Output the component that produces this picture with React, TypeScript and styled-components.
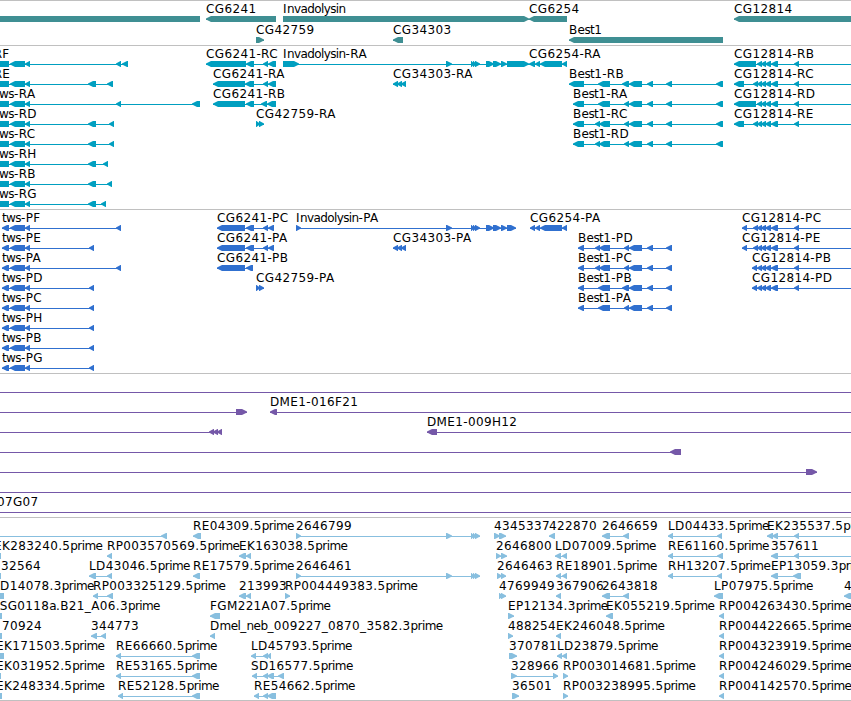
import React from 'react';
import styled, { createGlobalStyle } from 'styled-components';

const GlobalStyle = createGlobalStyle`
  body {
    margin: 0;
    background: #fff;
    overflow: hidden;
  }
`

const Browser = styled.div`
  width: 851px;
  height: 701px;
  overflow: hidden;
  background: #fff;
  border-bottom: 1px solid #c0c0c0;
  box-sizing: border-box;
`

const TrackBox = styled.section<{ $top: number, $bottom: number }>`
  border-top: 1px solid #c0c0c0;
  padding: ${(p) => p.$top}px 0 ${(p) => p.$bottom}px;
`

const Row = styled.div<{ $height: number }>`
  position: relative;
  display: flex;
  align-items: flex-end;
  height: ${(p) => p.$height}px;
`

// labels sit at the genomic start of their feature and may run into each other
const Label = styled.span`
  position: absolute;
  bottom: 6px;
  font: 12px/14px 'DejaVu Sans', sans-serif;
  letter-spacing: 0.36px;
  color: #000;
  white-space: pre;
`

const Lower = styled.span`
  letter-spacing: -0.6px;
`

const Glyphs = styled.svg`
  display: block;
  width: 851px;
  height: 6px;
`

type Block = [number, number]

type Feature = {
  name: string,
  x: number,
  dir: 'l' | 'r',
  blocks: Block[],
  from?: number,
  to?: number
}

type TrackData = {
  color: string,
  rowHeight: number,
  top: number,
  bottom: number,
  rows: Feature[][]
}

const EDGE = 870

const left = (name: string, x: number, blocks: Block[], to?: number): Feature => ({ name, x, dir: 'l', blocks, to })
const right = (name: string, x: number, blocks: Block[], from?: number): Feature => ({ name, x, dir: 'r', blocks, from })
const span = (name: string, x: number): Feature => ({ name, x, dir: 'l', blocks: [], from: -20, to: EDGE })

const twsCoding: Block[] = [[10, 25], [25, 30]]
const twsR: Block[] = [[-40, 9], ...twsCoding]
const twsP: Block[] = [[2, 9], ...twsCoding]
const invTail: Block[] = [[446, 452], [471, 474], [473, 476], [475, 480]]
const cg12814Tail: Block[] = [[757, 762], [761, 766], [765, 771], [771, 778], [794, 799]]
const best1Mid: Block[] = [[629, 642], [647, 653], [666, 672]]
const best1End: Block[] = [...best1Mid, [716, 723]]
const cg34303: Block[] = [[393, 398], [397, 402], [401, 406]]
const cg42759: Block[] = [[256, 260], [259, 264]]

const genes: TrackData = {
  color: '#3f8f93', rowHeight: 21, top: 0, bottom: 2,
  rows: [
    [
      left('', 0, [[-20, 200]]),
      left('CG6241', 206, [[206, 276]]),
      right('Invadolysin', 283, [[283, 529]]),
      left('CG6254', 529, [[529, 567]]),
      left('CG12814', 734, [[734, EDGE]]),
    ],
    [
      right('CG42759', 256, [[256, 264]]),
      left('CG34303', 393, [[393, 403]]),
      left('Best1', 569, [[569, 723]]),
    ],
  ],
}

const transcripts: TrackData = {
  color: '#009fc0', rowHeight: 20, top: 1, bottom: 2,
  rows: [
    [
      left('tws-RF', -30, [...twsR, [116, 121], [122, 128]]),
      left('CG6241-RC', 206, [[206, 246], [246, 254], [263, 268], [268, 276]]),
      right('Invadolysin-RA', 283, [[283, 299], ...invTail, [486, 494], [493, 501], [501, 507], [507, 529]]),
      left('CG6254-RA', 529, [[529, 535], [535, 540], [540, 562], [562, 567]]),
      left('CG12814-RB', 734, [[734, 756], ...cg12814Tail], EDGE),
    ],
    [
      left('tws-RE', -30, [...twsR, [88, 96], [107, 113]]),
      left('CG6241-RA', 213, [[213, 245], [245, 254], [263, 268], [268, 276]]),
      left('CG34303-RA', 393, cg34303),
      left('Best1-RB', 569, [[569, 584], [598, 610], [622, 629], ...best1End]),
      left('CG12814-RC', 734, [[734, 744], [753, 758], ...cg12814Tail], EDGE),
    ],
    [
      left('tws-RA', -5, [...twsR, [116, 121], [192, 200]]),
      left('CG6241-RB', 213, [[213, 245], [246, 254], [261, 267], [267, 276]]),
      left('Best1-RA', 573, [[573, 584], [598, 610], [624, 629], ...best1End]),
      left('CG12814-RD', 734, [[734, 756], ...cg12814Tail], EDGE),
    ],
    [
      left('tws-RD', -5, [...twsR, [88, 96], [109, 114]]),
      right('CG42759-RA', 256, cg42759),
      left('Best1-RC', 573, [[573, 584], [595, 600], [599, 610], [624, 629], ...best1End]),
      left('CG12814-RE', 734, [[734, 744], [753, 758], ...cg12814Tail], EDGE),
    ],
    [
      left('tws-RC', -5, [...twsR, [88, 96], [109, 114]]),
      left('Best1-RD', 573, [[573, 584], [595, 600], [599, 610], [624, 629], ...best1End]),
    ],
    [left('tws-RH', -5, [...twsR, [88, 96], [103, 108]])],
    [left('tws-RB', -5, [...twsR, [88, 96], [107, 112]])],
    [left('tws-RG', -5, [...twsR, [88, 96], [101, 106]])],
  ],
}

const proteins: TrackData = {
  color: '#3070cf', rowHeight: 20, top: 1, bottom: 2,
  rows: [
    [
      left('tws-PF', 2, [...twsP, [116, 121]]),
      left('CG6241-PC', 217, [[217, 245], [246, 254], [263, 268], [268, 274]]),
      right('Invadolysin-PA', 296, [[296, 301], ...invTail, [486, 494], [493, 501], [501, 507], [507, 516]]),
      left('CG6254-PA', 530, [[530, 535], [535, 540], [540, 562], [562, 567]]),
      left('CG12814-PC', 742, [[742, 747], [753, 758], ...cg12814Tail], EDGE),
    ],
    [
      left('tws-PE', 2, [...twsP, [89, 94]]),
      left('CG6241-PA', 217, [[217, 245], [246, 254], [263, 268], [268, 274]]),
      left('CG34303-PA', 393, cg34303),
      left('Best1-PD', 578, [[578, 584], [595, 600], [599, 610], [624, 629], ...best1Mid]),
      left('CG12814-PE', 742, [[742, 747], [753, 758], ...cg12814Tail], EDGE),
    ],
    [
      left('tws-PA', 2, [...twsP, [116, 121]]),
      left('CG6241-PB', 217, [[217, 245], [246, 253]]),
      left('Best1-PC', 578, [[578, 584], [595, 600], [599, 610], [624, 629], ...best1Mid]),
      left('CG12814-PB', 752, [[752, 757], ...cg12814Tail], EDGE),
    ],
    [
      left('tws-PD', 2, [...twsP, [89, 94]]),
      right('CG42759-PA', 256, cg42759),
      left('Best1-PB', 578, [[578, 584], [598, 610], [622, 629], ...best1Mid]),
      left('CG12814-PD', 752, [[752, 757], ...cg12814Tail], EDGE),
    ],
    [
      left('tws-PC', 2, [...twsP, [89, 94]]),
      left('Best1-PA', 578, [[578, 584], [598, 610], [624, 629], ...best1Mid]),
    ],
    [left('tws-PH', 2, [...twsP, [89, 94]])],
    [left('tws-PB', 2, [...twsP, [89, 94]])],
    [left('tws-PG', 2, [...twsP, [89, 94]])],
  ],
}

const clones: TrackData = {
  color: '#7558a8', rowHeight: 20, top: 1, bottom: 2,
  rows: [
    [span('', 0)],
    [
      right('', 0, [[236, 247]], -20),
      left('DME1-016F21', 270, [[270, 277]], EDGE),
    ],
    [
      { name: '', x: 0, dir: 'l', blocks: [[209, 214], [213, 218], [217, 222]], from: -20 },
      left('DME1-009H12', 427, [[427, 437]], EDGE),
    ],
    [{ name: '', x: 0, dir: 'l', blocks: [[670, 681]], from: -20 }],
    [right('', 0, [[806, 817]], -20)],
    [span('', 0)],
    [span('DME1-007G07', -52)],
  ],
}

const ests: TrackData = {
  color: '#88bfdf', rowHeight: 20, top: 1, bottom: 1,
  rows: [
    [
      { name: '', x: 0, dir: 'l', blocks: [[161, 167]], from: -20 },
      left('RE04309.5prime', 193, [[193, 201]]),
      right('2646799', 296, [[296, 301], ...invTail]),
      right('4345337', 494, [[494, 500], [499, 506]]),
      left('422870', 549, [[549, 555]]),
      left('2646659', 602, [[602, 610], [623, 629]]),
      left('LD04433.5prime', 668, [[668, 673], [717, 722]]),
      left('EK235537.5prime', 767, [[767, 773], [772, 778], [794, 799]], EDGE),
    ],
    [
      left('EK283240.5prime', -6, [[-9, 1]]),
      left('RP003570569.5prime', 107, [[107, 112]]),
      left('EK163038.5prime', 239, [[239, 246], [246, 251]]),
      right('2646800', 496, [[496, 501], [501, 507]]),
      left('LD07009.5prime', 555, [[555, 561], [562, 567]]),
      left('RE61160.5prime', 668, [[668, 673], [717, 723]]),
      left('357611', 771, [[771, 778], [794, 799]], EDGE),
    ],
    [
      left('32564', 1, [[-9, 1]]),
      left('LD43046.5prime', 89, [[89, 96], [107, 112]]),
      left('RE17579.5prime', 193, [[193, 200]]),
      right('2646461', 296, [[296, 301], ...invTail]),
      right('2646463', 497, [[497, 502], [501, 506]]),
      left('RE18901.5prime', 556, [[556, 561], [562, 567]]),
      left('RH13207.5prime', 668, [[668, 673], [717, 722]]),
      left('EP13059.3prime', 771, [[771, 778], [793, 801]]),
    ],
    [
      left('LD14078.3prime', -7, [[-9, 4]]),
      left('RP003325129.5prime', 93, [[93, 98], [107, 113]]),
      left('213993', 239, [[239, 246], [246, 251]]),
      right('RP004449383.5prime', 285, [[285, 290]]),
      right('4769949', 499, [[499, 503], [501, 506]]),
      left('367906', 556, [[556, 561]]),
      left('2643818', 602, [[602, 610], [623, 629]]),
      left('LP07975.5prime', 714, [[714, 723]]),
      left('4', 844, [[844, EDGE]]),
    ],
    [
      left('TSG0118a.B21_A06.3prime', -8, [[-9, 2]]),
      left('FGM221A07.5prime', 210, [[210, 220]]),
      right('EP12134.3prime', 508, [[508, 514]]),
      left('EK055219.5prime', 606, [[606, 613]]),
      left('RP004263430.5prime', 719, [[719, 724]]),
    ],
    [
      left('70924', 2, [[-9, 2]]),
      left('344773', 91, [[91, 97], [101, 106]]),
      left('Dmel_neb_009227_0870_3582.3prime', 210, [[210, 215]]),
      right('488254', 508, [[508, 513]]),
      left('EK246048.5prime', 556, [[556, 561]]),
      left('RP004422665.5prime', 719, [[719, 724]]),
    ],
    [
      left('EK171503.5prime', -4, [[-9, 4]]),
      left('RE66660.5prime', 116, [[116, 121], [192, 200]]),
      left('LD45793.5prime', 251, [[251, 256], [263, 268], [267, 271]]),
      right('370781', 509, [[509, 517]]),
      left('LD23879.5prime', 557, [[557, 562], [562, 567]]),
      left('RP004323919.5prime', 719, [[719, 724]]),
    ],
    [
      left('EK031952.5prime', -4, [[-9, 1]]),
      left('RE53165.5prime', 116, [[116, 121], [192, 200]]),
      left('SD16577.5prime', 251, [[252, 257], [263, 268], [267, 274], [278, 284]]),
      right('328966', 511, [[511, 517], [553, 558]]),
      right('RP003014681.5prime', 563, [[563, 568]]),
      left('RP004246029.5prime', 719, [[719, 724]]),
    ],
    [
      left('EK248334.5prime', -4, [[-9, 2]]),
      left('RE52128.5prime', 118, [[118, 123], [192, 200]]),
      left('RE54662.5prime', 254, [[254, 259], [263, 268], [267, 276]]),
      right('36501', 512, [[512, 519]]),
      right('RP003238995.5prime', 563, [[563, 568]]),
      left('RP004142570.5prime', 719, [[719, 724]]),
    ],
  ],
}

const tracks = [genes, transcripts, proteins, clones, ests]

// a block is a box whose leading end narrows to a point
const blockPoints = ([a, b]: Block, dir: 'l' | 'r') => {
  const head = Math.min(5, b - a - 0.5)
  return dir === 'l'
    ? `${a},2.4 ${a + head},0 ${b},0 ${b},6 ${a + head},6 ${a},3.6`
    : `${b},2.4 ${b - head},0 ${a},0 ${a},6 ${b - head},6 ${b},3.6`
}

const FeatureGlyph = ({ feature }: { feature: Feature }) => {
  const { blocks, dir } = feature
  const start = feature.from ?? blocks[0][0]
  const end = feature.to ?? blocks[blocks.length - 1][1]
  return (
    <g>
      <rect x={start} y={3} width={end - start} height={1} />
      {blocks.map((block, i) => <polygon key={i} points={blockPoints(block, dir)} />)}
    </g>
  )
}

// lower case runs are set tighter than capitals and digits
const nameParts = (name: string) => name.split(/([a-z]+)/).map((part, i) => (
  i % 2 ? <Lower key={i}>{part}</Lower> : part
))

const Track = ({ track }: { track: TrackData }) => (
  <TrackBox $top={track.top} $bottom={track.bottom}>
    {track.rows.map((features, r) => (
      <Row key={r} $height={track.rowHeight}>
        <Glyphs viewBox='0 0 851 6' fill={track.color}>
          {features.map((feature, i) => <FeatureGlyph key={i} feature={feature} />)}
        </Glyphs>
        {features.filter((feature) => feature.name).map((feature) => (
          <Label key={feature.name} style={{ left: feature.x }}>{nameParts(feature.name)}</Label>
        ))}
      </Row>
    ))}
  </TrackBox>
)

const App = () => (
  <>
    <GlobalStyle />
    <Browser>
      {tracks.map((track, i) => <Track key={i} track={track} />)}
    </Browser>
  </>
)

export default App;
